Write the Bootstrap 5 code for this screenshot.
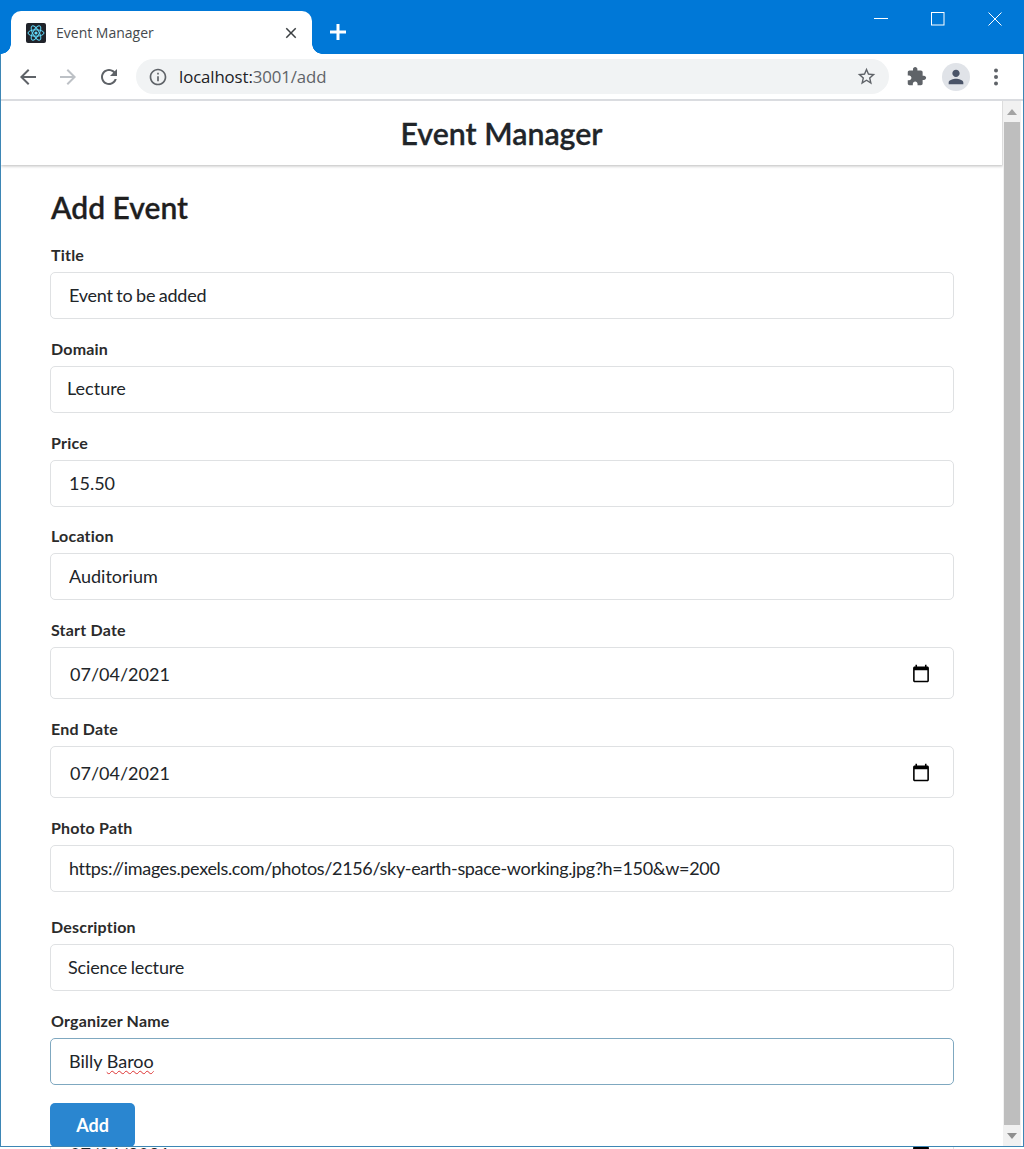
<!DOCTYPE html>
<html lang="en">
<head>
    <meta charset="UTF-8">
    <meta name="viewport" content="width=device-width, initial-scale=1.0">
    <title>Event Manager</title>
    <link href="https://cdn.jsdelivr.net/npm/bootstrap@5.3.3/dist/css/bootstrap.min.css" rel="stylesheet">
    <script src="https://cdn.jsdelivr.net/npm/bootstrap@5.3.3/dist/js/bootstrap.bundle.min.js"></script>
    <style>
        html, body { height: 1149px; overflow: hidden; }
        body { font-family: Lato, "Liberation Sans", sans-serif; color: #212529; background: #fff; }
        .app-window { height: 1149px; border-left: 1px solid #3d86b5; border-right: 1px solid #3d86b5; }

        /* chrome title bar */
        .title-bar { height: 54px; background: #0078d7; margin: 0 -1px; flex: none; }
        .tab-shape { width: 301px; height: 43px; margin-left: 11px; margin-top: 11px; background: #fff; border-radius: 10px 10px 0 0; position: relative; padding: 0 12px 0 15px; }
        .tab-shape::before, .tab-shape::after { content: ""; position: absolute; bottom: 0; width: 10px; height: 10px; }
        .tab-shape::before { left: -10px; background: radial-gradient(circle at 0 0, #0078d7 9.5px, #fff 10px); }
        .tab-shape::after { right: -10px; background: radial-gradient(circle at 100% 0, #0078d7 9.5px, #fff 10px); }
        .tab-title { font-family: "Open Sans", "Noto Sans", sans-serif; font-size: 14px; color: #45494d; margin-left: 10px; }
        .new-tab { width: 24px; height: 24px; margin-left: 14px; margin-top: 20px; }
        .win-btn { width: 57px; height: 38px; }
        .win-group { margin-right: 1px; }

        /* chrome toolbar */
        .tool-bar { height: 47px; background: #fff; border-bottom: 2px solid #dadce0; flex: none; padding: 0 7px; }
        .tool-btn { width: 40px; height: 40px; }
        .tool-btn.reload-btn { padding-left: 1px; }
        .omni-box { height: 35px; background: #f1f3f4; border-radius: 18px; margin: 0 7px 0 8px; padding: 0 12px 0 12px; flex: 1; }
        .omni-url { font-family: "Open Sans", "Noto Sans", sans-serif; font-size: 16.8px; color: #202124; margin-left: 11px; letter-spacing: -.1px; }
        .omni-url span { color: #5f6368; }
        .avatar-dot { width: 28px; height: 28px; border-radius: 50%; background: #e0e3e8; }

        /* page */
        .page-row { height: 1045px; flex: none; }
        .page-main { width: 1002px; overflow: hidden; flex: none; }
        .top-head { height: 64px; background: #fff; box-shadow: 0 1px 3px rgba(0,0,0,.28); border-right: 1px solid #ddd; }
        .top-head-title { font-size: 30.3px; font-weight: 600; color: #212529; margin: 0; line-height: 1; -webkit-text-stroke: .3px #212529; }
        .form-wrap { padding: 0 49px; }
        .page-heading { font-size: 30px; font-weight: 600; color: #1f1f1f; margin: 23px 0 19px; line-height: 38px; padding-left: 1px; -webkit-text-stroke: .3px #1f1f1f; }
        .field-group { margin-bottom: 19.75px; }
        .field-group.extra-gap { margin-bottom: 25.75px; }
        .field-group.last-field { margin-bottom: 18px; }
        .field-label { font-size: 16px; font-weight: 700; line-height: 20px; margin-bottom: 7px; color: #2b2b2b; display: block; padding-left: 1px; letter-spacing: .2px; }
        .field-input { height: 47px; font-size: 18px; line-height: 24px; padding: 0 18px; color: #212529; border-color: #dfe1e3; border-radius: 5px; }
        .field-input.text-up { padding-bottom: 2px; }
        .field-input.select-text { padding-left: 16px; }
        .field-input.desc-text { padding-left: 17px; letter-spacing: -.15px; word-spacing: -.8px; }
        .field-input.title-text { letter-spacing: -.25px; word-spacing: -.7px; }
        .field-input.url-text { letter-spacing: -.33px; }
        .field-input.date-field { height: 52px; padding-left: 19px; padding-right: 22px; padding-top: 2px; }
        .field-input.date-field::-webkit-calendar-picker-indicator { width: 20px; height: 20px; padding: 0; margin: 0; }
        .field-input.focus-field { border-color: #7fa8c0; display: flex; align-items: center; }
        .spell-miss { text-decoration: underline wavy #d33; text-decoration-thickness: 1px; text-underline-offset: 2px; }
        .add-btn { width: 85px; height: 44px; background: #2a86d0; border: 0; border-radius: 5px; font-size: 18px; font-weight: 700; padding: 0; }

        /* scrollbar */
        .scroll-rail { width: 18px; background: #f1f1f1; flex: none; }
        .scroll-thumb { flex: 1; background: #bebebe; margin: 0 1px; }
        .scroll-end { height: 21px; }
        .under-strip { height: 3px; overflow: hidden; flex: 1; border-top: 1px solid #3d86b5; margin: 0 -1px; background: #fff; position: relative; }
        .under-strip .field-input { margin: -20px 0 0 0; width: 904px; position: absolute; left: 50px; top: 0; }
        .add-over { position: relative; z-index: 3; }
    </style>
</head>
<body>
<div class="app-window d-flex flex-column">

    <div class="title-bar d-flex">
        <div class="tab-shape d-flex align-items-center">
            <svg width="20" height="20" viewBox="0 0 20 20">
                <rect width="20" height="20" rx="2" fill="#20232a"/>
                <g fill="none" stroke="#61dafb" stroke-width="1">
                    <ellipse cx="10" cy="10" rx="8" ry="3.2"/>
                    <ellipse cx="10" cy="10" rx="8" ry="3.2" transform="rotate(60 10 10)"/>
                    <ellipse cx="10" cy="10" rx="8" ry="3.2" transform="rotate(120 10 10)"/>
                </g>
                <circle cx="10" cy="10" r="1.6" fill="#61dafb"/>
            </svg>
            <span class="tab-title flex-grow-1">Event Manager</span>
            <svg width="18" height="18" viewBox="0 0 24 24" fill="#3c4043"><path d="M19 6.41L17.59 5 12 10.59 6.41 5 5 6.41 10.59 12 5 17.59 6.41 19 12 13.41 17.59 19 19 17.59 13.41 12z"/></svg>
        </div>
        <svg class="new-tab" viewBox="0 0 24 24" fill="#fff"><path d="M20 10.5h-6.5V4h-3v6.5H4v3h6.5V20h3v-6.5H20z"/></svg>
        <div class="d-flex ms-auto win-group">
            <div class="win-btn d-flex align-items-center justify-content-center">
                <svg width="14" height="14" viewBox="0 0 14 14"><path d="M0 6.5h14" stroke="#fff" fill="none"/></svg>
            </div>
            <div class="win-btn d-flex align-items-center justify-content-center">
                <svg width="14" height="14" viewBox="0 0 14 14"><rect x=".5" y=".5" width="12.5" height="12.5" stroke="#fff" fill="none"/></svg>
            </div>
            <div class="win-btn d-flex align-items-center justify-content-center">
                <svg width="14" height="14" viewBox="0 0 14 14"><path d="M.5.5l13 13M13.500.5l-13 13" stroke="#fff" fill="none"/></svg>
            </div>
        </div>
    </div>

    <div class="tool-bar d-flex align-items-center">
        <div class="tool-btn d-flex align-items-center justify-content-center">
            <svg width="24" height="24" viewBox="0 0 24 24" fill="#5f6368"><path d="M20 11H7.830l5.590-5.590L12 4l-8 8 8 8 1.410-1.410L7.830 13H20v-2z"/></svg>
        </div>
        <div class="tool-btn d-flex align-items-center justify-content-center">
            <svg width="24" height="24" viewBox="0 0 24 24" fill="#bdc1c6"><path d="M4 11h12.170l-5.590-5.590L12 4l8 8-8 8-1.410-1.410L16.170 13H4v-2z"/></svg>
        </div>
        <div class="tool-btn reload-btn d-flex align-items-center justify-content-center">
            <svg width="24" height="24" viewBox="0 0 24 24" fill="#5f6368"><path d="M17.650 6.350C16.200 4.900 14.210 4 12 4c-4.420 0-7.990 3.580-7.990 8s3.570 8 7.990 8c3.730 0 6.840-2.550 7.730-6h-2.080c-.82 2.330-3.040 4-5.650 4-3.310 0-6-2.690-6-6s2.690-6 6-6c1.660 0 3.140.69 4.220 1.780L13 11h7V4l-2.350 2.350z"/></svg>
        </div>
        <div class="omni-box d-flex align-items-center">
            <svg width="20" height="20" viewBox="0 0 24 24" fill="#5f6368"><path d="M11 7h2v2h-2zm0 4h2v6h-2zm1-9C6.480 2 2 6.480 2 12s4.480 10 10 10 10-4.480 10-10S17.520 2 12 2zm0 18c-4.410 0-8-3.590-8-8s3.590-8 8-8 8 3.590 8 8-3.590 8-8 8z"/></svg>
            <div class="omni-url flex-grow-1">localhost:<span>3001/add</span></div>
            <svg width="21" height="21" viewBox="0 0 24 24" fill="#5f6368"><path d="M22 9.240l-7.190-.62L12 2 9.190 8.630 2 9.240l5.460 4.730L5.820 21 12 17.270 18.180 21l-1.630-7.030L22 9.240zM12 15.400l-3.760 2.270 1-4.280-3.320-2.880 4.380-.38L12 6.100l1.710 4.040 4.380.38-3.320 2.880 1 4.280L12 15.400z"/></svg>
        </div>
        <div class="tool-btn d-flex align-items-center justify-content-center">
            <svg width="21" height="21" viewBox="0 0 24 24" fill="#5f6368"><path d="M20.500 11H19V7c0-1.100-.9-2-2-2h-4V3.500C13 2.120 11.880 1 10.500 1S8 2.120 8 3.500V5H4c-1.100 0-1.990.9-1.990 2v3.800H3.500c1.490 0 2.700 1.210 2.700 2.700s-1.210 2.700-2.700 2.700H2V20c0 1.100.9 2 2 2h3.800v-1.500c0-1.490 1.210-2.700 2.700-2.700 1.490 0 2.700 1.210 2.700 2.700V22H17c1.100 0 2-.9 2-2v-4h1.500c1.380 0 2.500-1.120 2.500-2.500S21.880 11 20.500 11z"/></svg>
        </div>
        <div class="tool-btn d-flex align-items-center justify-content-center">
            <div class="avatar-dot d-flex align-items-center justify-content-center">
                <svg width="22" height="22" viewBox="0 0 24 24" fill="#4a5468"><path d="M12 12c2.210 0 4-1.790 4-4s-1.790-4-4-4-4 1.790-4 4 1.790 4 4 4zm0 2c-2.670 0-8 1.340-8 4v2h16v-2c0-2.660-5.330-4-8-4z"/></svg>
            </div>
        </div>
        <div class="tool-btn d-flex align-items-center justify-content-center">
            <svg width="24" height="24" viewBox="0 0 24 24" fill="#5f6368"><circle cx="12" cy="5.500" r="2"/><circle cx="12" cy="12" r="2"/><circle cx="12" cy="18.500" r="2"/></svg>
        </div>
    </div>

    <div class="page-row d-flex">
        <div class="page-main">
            <nav class="navbar top-head justify-content-center p-0">
                <h1 class="top-head-title">Event Manager</h1>
            </nav>
            <div class="form-wrap">
                <h2 class="page-heading">Add Event</h2>
                <form>
                    <div class="field-group">
                        <label class="form-label field-label">Title</label>
                        <input class="form-control field-input title-text text-up" type="text" value="Event to be added">
                    </div>
                    <div class="field-group">
                        <label class="form-label field-label">Domain</label>
                        <input class="form-control field-input select-text text-up" type="text" value="Lecture">
                    </div>
                    <div class="field-group">
                        <label class="form-label field-label">Price</label>
                        <input class="form-control field-input" type="text" value="15.50">
                    </div>
                    <div class="field-group">
                        <label class="form-label field-label">Location</label>
                        <input class="form-control field-input text-up" type="text" value="Auditorium">
                    </div>
                    <div class="field-group">
                        <label class="form-label field-label">Start Date</label>
                        <input class="form-control field-input date-field" type="date" value="2021-07-04">
                    </div>
                    <div class="field-group">
                        <label class="form-label field-label">End Date</label>
                        <input class="form-control field-input date-field" type="date" value="2021-07-04">
                    </div>
                    <div class="field-group extra-gap">
                        <label class="form-label field-label">Photo Path</label>
                        <input class="form-control field-input url-text" type="text" value="https://images.pexels.com/photos/2156/sky-earth-space-working.jpg?h=150&amp;w=200">
                    </div>
                    <div class="field-group">
                        <label class="form-label field-label">Description</label>
                        <input class="form-control field-input desc-text text-up" type="text" value="Science lecture">
                    </div>
                    <div class="field-group last-field">
                        <label class="form-label field-label">Organizer Name</label>
                        <div class="form-control field-input focus-field text-up">Billy&nbsp;<span class="spell-miss">Baroo</span></div>
                    </div>
                    <button type="button" class="btn btn-primary add-btn add-over">Add</button>
                </form>
            </div>
        </div>
        <div class="scroll-rail d-flex flex-column">
            <div class="scroll-end d-flex align-items-center justify-content-center">
                <svg width="10" height="6" viewBox="0 0 10 6"><path d="M5 0l5 6H0z" fill="#a3a3a3"/></svg>
            </div>
            <div class="scroll-thumb"></div>
            <div class="scroll-end d-flex align-items-center justify-content-center">
                <svg width="10" height="6" viewBox="0 0 10 6"><path d="M5 6l5-6H0z" fill="#8f8f8f"/></svg>
            </div>
        </div>
    </div>

    <div class="under-strip">
        <input class="form-control field-input date-field" type="date" value="2021-07-04">
    </div>
</div>
</body>
</html>
